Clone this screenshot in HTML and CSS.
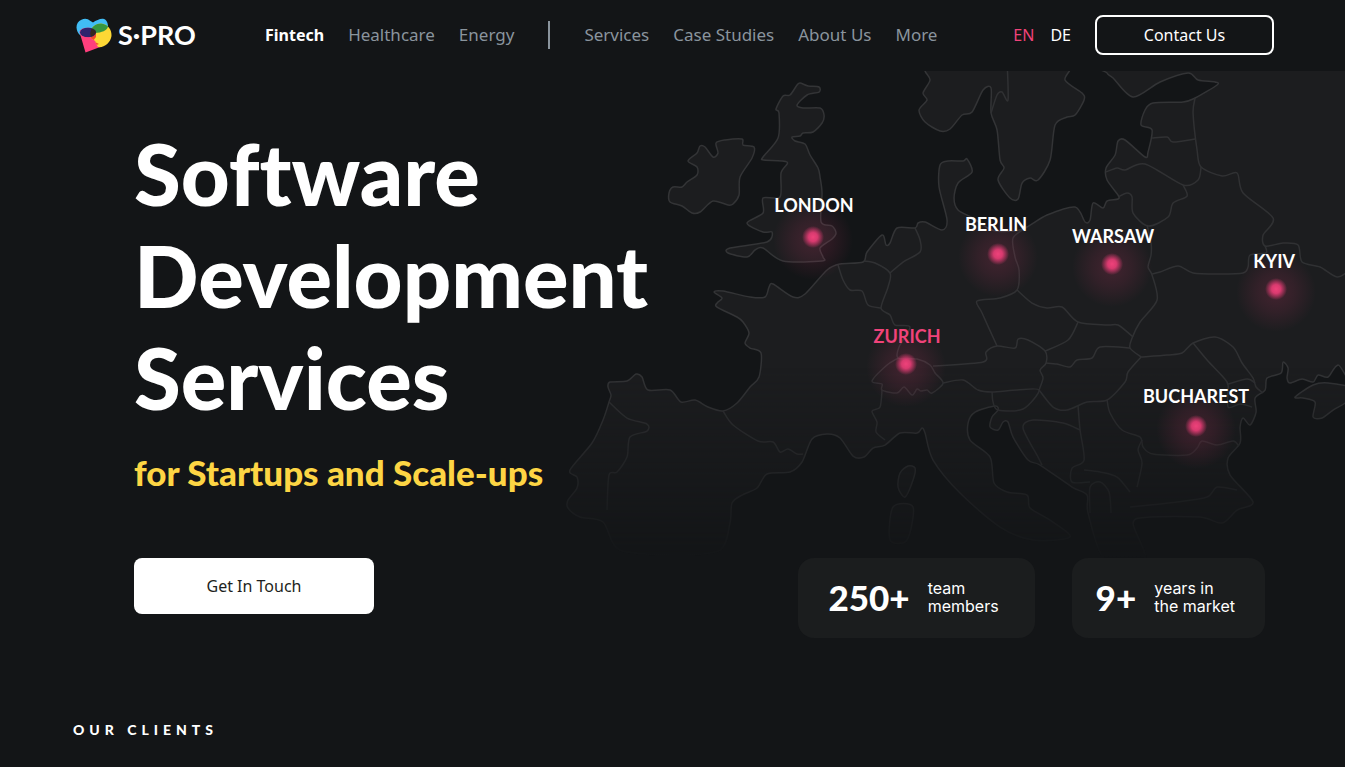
FILE: index.html
```html
<!DOCTYPE html>
<html lang="en">
<head>
<meta charset="utf-8">
<meta name="viewport" content="width=device-width, initial-scale=1">
<title>S-PRO – Software Development Services</title>
<link rel="stylesheet" href="styles.css">
</head>
<body>
<header class="header">
  <a class="logo" href="#" aria-label="S-PRO home">
    <svg class="logo-mark" viewBox="0 0 36 35" aria-hidden="true">
      <defs>
        <clipPath id="blue-shape"><path d="M.5 9.500A8.500 8.500 0 0 1 14.500 3L17 4.500C20 2.500 24 .5 27 .8C31 1.500 33 6.500 31.500 11.500C30 16 19 19 13 19.500C5 19.500 1 16 .5 9.500Z"/></clipPath>
        <clipPath id="yellow-shape"><path d="M14.500 19C13 11 18 5.500 25 5.500C32 6 36 12 35.500 18C34.500 25 28 30 22 29L19.500 24.500C20.500 22 15 22 14.500 19Z"/></clipPath>
      </defs>
      <path fill="#41bdf5" d="M.5 9.500A8.500 8.500 0 0 1 14.500 3L17 4.500C20 2.500 24 .5 27 .8C31 1.500 33 6.500 31.500 11.500C30 16 19 19 13 19.500C5 19.500 1 16 .5 9.500Z"/>
      <path fill="#ff3f7d" d="M3.500 14C4 9 19 8 20 14V22L25.500 28.500L9.500 34.500Z"/>
      <path fill="#fdd835" d="M14.500 19C13 11 18 5.500 25 5.500C32 6 36 12 35.500 18C34.500 25 28 30 22 29L19.500 24.500C20.500 22 15 22 14.500 19Z"/>
      <g clip-path="url(#yellow-shape)">
        <path fill="#37973f" d="M1 11A8.500 8.500 0 0 1 14.500 3L28 1.200C32 2.500 33.500 6.500 31.500 10C29 14 22 15.500 13 15Z"/>
        <path fill="#f4492f" d="M13 14H20V19L17 23L23 26L18 28L13 22Z"/>
      </g>
      <g clip-path="url(#blue-shape)"><ellipse cx="12" cy="14.500" rx="8" ry="4.800" fill="#30236d"/></g>
      <path fill="#36271f" d="M15.500 10.800Q19.500 11.500 20 14.500Q18.500 18 14.800 18.500Q13.500 14.500 15.500 10.800Z"/>
    </svg>
    <span class="logo-text">S·PRO</span>
  </a>
  <nav class="nav" aria-label="Main">
    <a class="nav-link is-active" href="#">Fintech</a>
    <a class="nav-link" href="#">Healthcare</a>
    <a class="nav-link" href="#">Energy</a>
    <span class="nav-divider"></span>
    <a class="nav-link" href="#">Services</a>
    <a class="nav-link" href="#">Case Studies</a>
    <a class="nav-link" href="#">About Us</a>
    <a class="nav-link" href="#">More</a>
  </nav>
  <div class="header-end">
    <nav class="languages" aria-label="Language">
      <a class="language is-current" href="#">EN</a>
      <a class="language" href="#">DE</a>
    </nav>
    <button class="contact" type="button">Contact Us</button>
  </div>
</header>

<main>
  <section class="hero">
    <svg class="map" viewBox="565 71 780 489" role="img" aria-label="Office locations in Europe">
      <defs>
        <linearGradient id="fade" x1="0" y1="71" x2="0" y2="560" gradientUnits="userSpaceOnUse">
          <stop offset="0" stop-color="#fff"/>
          <stop offset=".6" stop-color="#fff"/>
          <stop offset=".8" stop-color="#888"/>
          <stop offset="1" stop-color="#000"/>
        </linearGradient>
        <mask id="fade-mask" maskUnits="userSpaceOnUse" x="560" y="66" width="790" height="500">
          <rect x="560" y="66" width="790" height="500" fill="url(#fade)"/>
        </mask>
        <radialGradient id="glow">
          <stop offset="0" stop-color="#f43f7b" stop-opacity=".18"/>
          <stop offset=".5" stop-color="#f43f7b" stop-opacity=".1"/>
          <stop offset="1" stop-color="#f43f7b" stop-opacity="0"/>
        </radialGradient>
        <radialGradient id="dot">
          <stop offset="0" stop-color="#ee427a"/>
          <stop offset=".4" stop-color="#d83a6f"/>
          <stop offset="1" stop-color="#d83a6f" stop-opacity="0"/>
        </radialGradient>
      </defs>
      <g mask="url(#fade-mask)">
        <g id="land" class="land"></g>
        <g id="borders" class="borders"></g>
      </g>
      <g id="pins"></g>
      <g class="cities">
        <text x="814" y="212">LONDON</text>
        <text x="996" y="231">BERLIN</text>
        <text x="1113" y="243">WARSAW</text>
        <text x="1274" y="268">KYIV</text>
        <text x="907" y="343" class="is-main">ZURICH</text>
        <text x="1196" y="403">BUCHAREST</text>
      </g>
    </svg>
    <div class="hero-content">
      <h1 class="title">Software<br>Development<br>Services</h1>
      <p class="subtitle">for Startups and Scale-ups</p>
      <div class="hero-bottom">
        <button class="cta" type="button">Get In Touch</button>
        <div class="stats">
          <div class="stat"><strong class="stat-value">250+</strong><span class="stat-label">team<br>members</span></div>
          <div class="stat is-narrow"><strong class="stat-value">9+</strong><span class="stat-label">years in<br>the market</span></div>
        </div>
      </div>
    </div>
  </section>
  <section class="clients">
    <h2 class="clients-title">OUR CLIENTS</h2>
  </section>
</main>
<script src="map.js"></script>
</body>
</html>
```
FILE: styles.css
```css
* { box-sizing: border-box; }

body {
  margin: 0;
  background: #131517;
  color: #fff;
  font-family: "Noto Sans", sans-serif;
  font-size: 16px;
}

a { color: inherit; text-decoration: none; }
button { font: inherit; cursor: pointer; }

.header {
  display: flex;
  align-items: center;
  height: 70px;
  padding: 0 71px 0 76px;
}

.logo { display: flex; align-items: center; gap: 6px; width: 189px; }
.logo-mark { width: 36px; height: 35px; }
.logo-text { font: 700 27px/34px Lato, sans-serif; }

.nav { display: flex; align-items: center; gap: 24px; }
.nav-link { color: #8a949d; font-size: 17px; line-height: 22px; white-space: nowrap; }
.nav-link.is-active { color: #fff; font-size: 16px; font-weight: 700; }
.nav-divider { width: 2px; height: 28px; margin: 0 10px; background: #8a949d; }

.header-end { display: flex; align-items: center; gap: 24px; margin-left: auto; }
.languages { display: flex; gap: 16px; line-height: 22px; }
.is-current { color: #f0437a; }
.contact {
  width: 179px;
  height: 40px;
  border: 2px solid #fff;
  border-radius: 8px;
  background: transparent;
  color: #fff;
}

.hero { position: relative; padding: 52px 80px 0 134px; }
.map { position: absolute; top: 1px; right: 0; width: 58%; overflow: hidden; }
.land { fill: #1c1d1f; stroke: #333436; stroke-width: 1.5; }
.borders { fill: none; stroke: #303133; stroke-width: 1.5; }
.cities { fill: #fff; font: 700 18px Lato, sans-serif; text-anchor: middle; }
.is-main { fill: #f0437a; }

.hero-content { position: relative; }
.title {
  margin: 0;
  font: 900 85px/102px Lato, sans-serif;
  font-variant-ligatures: none;
}
.subtitle { margin: 20px 0 0; color: #fdd544; font: 900 35px/48px Lato, sans-serif; }
.hero-bottom { display: flex; justify-content: space-between; align-items: flex-start; margin-top: 62px; }
.cta {
  width: 240px;
  height: 56px;
  border: 0;
  border-radius: 8px;
  background: #fff;
  color: #1d1f21;
}

.stats { display: flex; gap: 37px; }
.stat {
  display: flex;
  align-items: center;
  gap: 18px;
  height: 80px;
  padding: 0 36px 2px 30px;
  border-radius: 16px;
  background: #1b1d1e;
}
.stat.is-narrow { padding: 0 30px 2px 24px; }
.stat-value { font: 900 35px/40px Lato, sans-serif; }
.stat-label { font: 16px/18px Inter, sans-serif; }

.clients { padding: 82px 73px 24px; }
.clients-title { margin: 0; font: 900 14px/20px Lato, sans-serif; letter-spacing: 5px; }
```
FILE: map.js
```js
const SVG = "http://www.w3.org/2000/svg";

const land = [
  // Great Britain
  "800,83 808,86 819,87 819,92 807,95 797,105 803,108 820,108 824,115 822,123 813,132 803,133 800,136 792,137 795,141 805,144 810,155 818,168 820,177 822,193 821,222 832,226 836,233 832,239 820,248 823,257 822,261 783,261 763,248 755,250 747,257 728,253 730,248 767,242 772,232 763,232 747,223 763,213 763,198 780,197 781,173 787,162 764,160 763,157 778,138 779,113 776,109 783,96 790,95 797,85",
  // Ireland
  "742,139 743,145 754,147 752,158 740,177 739,195 733,204 728,205 713,201 700,212 692,213 682,206 670,202 669,193 673,187 682,187 687,182 697,175 697,167 688,161 697,153 700,146 705,147 713,157 718,153 716,143 725,140",
  // Scandinavia
  "925,60 925,71 930,80 923,93 927,100 919,110 925,122 940,131 950,129 962,115 972,112 983,90 991,88 991,113 997,130 1000,160 1004,168 998,180 1010,198 1018,199 1022,183 1030,178 1038,180 1050,160 1055,125 1067,117 1075,115 1084,100 1082,93 1065,80 1063,60",
  // Mainland
  "570,470 592,443 603,420 609,402 611,395 608,387 610,382 627,381 636,374 642,377 648,390 670,390 681,402 695,400 708,407 723,411 737,403 750,387 759,377 761,353 750,348 745,343 749,333 743,322 737,317 717,307 717,303 722,298 714,292 723,291 750,297 765,297 769,287 773,284 793,297 805,294 827,270 840,264 863,262 867,252 882,235 886,245 890,243 897,228 915,228 918,223 925,222 942,230 947,220 939,187 940,165 948,161 963,161 967,159 972,172 958,183 954,198 958,210 973,218 992,230 1015,231 1027,227 1047,215 1075,207 1085,222 1090,220 1093,203 1103,208 1107,201 1118,199 1118,195 1107,180 1106,168 1115,155 1118,141 1125,140 1145,157 1148,152 1152,130 1141,125 1145,110 1153,103 1183,102 1195,98 1217,85 1215,82 1198,80 1188,73 1160,82 1133,97 1113,78 1107,73 1105,60 1360,60 1360,367 1338,365 1328,377 1318,375 1313,382 1302,379 1290,383 1287,378 1288,368 1283,362 1281,373 1267,378 1265,390 1255,398 1256,412 1250,425 1243,418 1240,427 1240,443 1228,458 1230,475 1253,502 1237,510 1222,523 1200,517 1150,517 1133,523 1145,560 1105,560 1088,513 1087,495 1072,487 1040,465 1028,460 1013,437 1008,422 1003,422 998,430 990,427 992,417 998,410 995,406 975,412 968,423 970,440 990,457 994,483 1007,492 1027,495 1030,508 1050,520 1070,537 1033,540 1000,527 960,493 933,460 925,433 922,428 917,433 900,433 885,445 873,448 864,457 853,456 840,438 827,434 812,439 802,462 790,472 767,474 757,488 742,495 732,503 730,523 720,550 677,555 620,550 603,522 580,517 568,508 568,500 577,488 577,477",
  // Corsica, Sardinia
  "908,466 915,468 913,480 905,497 898,487 900,473",
  "893,507 913,507 907,540 890,540",
  // Crimea
  "1295,397 1313,385 1328,383 1360,390 1345,403 1333,410 1322,418 1313,417 1315,402 1303,398"
];

const borders = [
  "991,113 997,95 1002,92 1008,100 1007,60",
  "1195,98 1193,113 1197,150 1201,167 1222,176 1237,173 1243,193 1273,218 1263,235 1265,246 1283,243 1298,245 1302,262 1320,267 1337,277 1350,270",
  "1265,246 1266,253 1250,255 1248,267 1243,273 1220,274 1193,273 1178,266 1160,272 1152,274",
  "1152,138 1167,137 1173,142 1195,139",
  "1106,172 1117,168 1125,170 1145,164 1183,185 1198,180 1201,167",
  "1183,185 1187,196 1173,203 1168,217 1148,226 1133,213 1132,197 1127,193 1118,197",
  "1147,225 1151,243 1151,255 1148,267 1152,275 1157,300 1140,322 1132,338 1130,348 1141,357",
  "1027,227 1013,238 1015,257 1019,270 1017,290 1000,298 977,301 982,313 997,346",
  "1017,290 1032,303 1047,308 1062,307 1078,322 1107,325 1118,325 1133,337",
  "1078,322 1068,340 1045,351",
  "933,366 983,362 986,352 997,346 1015,348 1018,339 1028,340 1045,351 1046,363 1040,370 1043,378 1039,390",
  "1046,363 1057,364 1070,367 1077,360 1092,358 1100,347 1130,348",
  "1141,357 1128,372 1125,382 1107,400 1087,402 1067,410 1053,407 1039,390",
  "1141,357 1167,355 1182,353 1193,343 1215,337 1233,347 1242,363 1253,378 1256,387 1263,393",
  "1193,343 1207,360 1223,377 1228,385 1228,407 1240,404 1252,407",
  "1228,384 1247,379 1255,383",
  "1107,400 1110,413 1122,430 1140,437 1143,447 1153,454 1187,455 1197,448 1202,441 1217,445 1233,441 1239,446",
  "1142,440 1138,450 1142,463 1137,487",
  "1078,406 1080,430 1084,460 1072,468 1072,482 1090,482",
  "1080,430 1063,423 1033,420 1023,428 1038,457 1042,465",
  "943,383 963,380 978,390 992,392 1017,390 1039,390 1023,409 998,410 993,402 992,392",
  "898,358 887,365 872,381 882,384 882,390 897,393 904,387 912,395 917,389 921,391 927,390 932,393 943,383 935,373 930,365 917,359 898,358 899,347 910,327 895,325 890,315 881,308 888,287 890,273 875,263 864,261",
  "882,390 880,407 872,411 877,422 876,432 885,440",
  "838,265 843,280 850,290 862,291 868,305 881,308",
  "890,273 903,262 920,252 920,240 915,228",
  "723,411 733,425 758,441 773,442 780,452 788,449 797,454 803,454",
  "609,402 627,418 647,424 647,431 630,437 627,457 617,472 609,475 607,510",
  "1084,470 1100,472 1117,477 1130,492",
  "1090,513 1090,487 1100,482 1109,492 1111,513",
  "1130,507 1150,505 1177,502 1207,497 1217,487 1237,490"
];

const pins = [[813, 237], [998, 254], [1112, 264], [1276, 289], [906, 364], [1196, 426]];

// Turns a list of points into a softly rounded curve through all of them.
function curve(list, closed) {
  const p = list.split(" ").map(pair => pair.split(",").map(Number));
  const n = p.length;
  const at = i => closed ? p[(i + n) % n] : p[Math.max(0, Math.min(n - 1, i))];
  let d = "M" + p[0];
  for (let i = 0; i < (closed ? n : n - 1); i++) {
    const [a, b, c, e] = [at(i - 1), at(i), at(i + 1), at(i + 2)];
    d += "C" + [
      b[0] + (c[0] - a[0]) / 7, b[1] + (c[1] - a[1]) / 7,
      c[0] - (e[0] - b[0]) / 7, c[1] - (e[1] - b[1]) / 7,
      c[0], c[1]
    ].join(" ");
  }
  return closed ? d + "Z" : d;
}

function add(parentId, name, attributes) {
  const node = document.createElementNS(SVG, name);
  for (const key in attributes) node.setAttribute(key, attributes[key]);
  document.getElementById(parentId).append(node);
}

land.forEach(list => add("land", "path", { d: curve(list, true) }));
borders.forEach(list => add("borders", "path", { d: curve(list, false) }));
pins.forEach(([cx, cy]) => {
  add("pins", "circle", { cx, cy: cy + 3, r: 40, fill: "url(#glow)" });
  add("pins", "circle", { cx, cy, r: 11, fill: "url(#dot)" });
});
```
